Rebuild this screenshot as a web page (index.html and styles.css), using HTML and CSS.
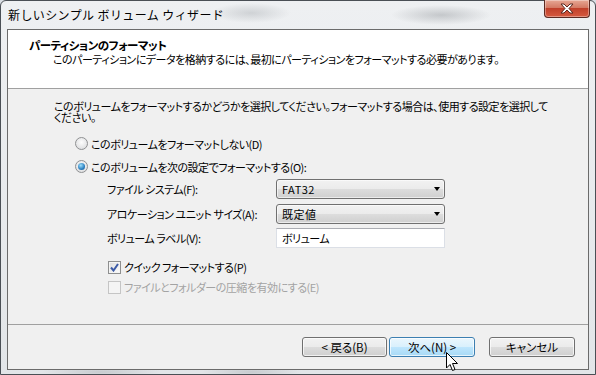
FILE: index.html
```html
<!DOCTYPE html>
<html lang="ja">
<head>
  <meta charset="UTF-8">
  <title>新しいシンプル ボリューム ウィザード</title>
  <link rel="stylesheet" href="styles.css">
</head>
<body>

  <div class="window">
    <div class="titlebar">
      <span class="title">新しいシンプル ボリューム ウィザード</span>
      <div class="close">
        <svg width="16" height="11" viewBox="0 0 16 11">
          <path d="M2 1 L5 1 L8 4 L11 1 L14 1 L10 5.5 L14 10 L11 10 L8 7 L5 10 L2 10 L6 5.5 Z" fill="#fff" stroke="#5a2a22" stroke-width="1"/>
        </svg>
      </div>
    </div>

    <div class="client">
      <!-- ヘッダー -->
      <div class="header">
        <div class="h-title">パーティションのフォーマット</div>
        <div class="h-sub">このパーティションにデータを格納するには、最初にパーティションをフォーマットする必要があります。</div>
      </div>

      <!-- 本体 -->
      <div class="content">
        <p class="intro">このボリュームをフォーマットするかどうかを選択してください。フォーマットする場合は、使用する設定を選択して<br>ください。</p>

        <div class="radios">
          <div class="opt"><span class="radio"></span>このボリュームをフォーマットしない(D)</div>
          <div class="opt"><span class="radio on"></span>このボリュームを次の設定でフォーマットする(O):</div>
        </div>

        <div class="fields">
          <div class="field">
            <span class="label">ファイル システム(F):</span>
            <div class="combo">FAT32<span class="arrow"></span></div>
          </div>
          <div class="field second">
            <span class="label">アロケーション ユニット サイズ(A):</span>
            <div class="combo">既定値<span class="arrow"></span></div>
          </div>
          <div class="field third">
            <span class="label">ボリューム ラベル(V):</span>
            <div class="textbox">ボリューム</div>
          </div>
        </div>

        <div class="checks">
          <div class="opt">
            <span class="check">
              <svg width="9" height="9" viewBox="0 0 9 9"><path d="M1 4.5 L3.5 7.5 L8 1" fill="none" stroke="#3b5aa6" stroke-width="2"/></svg>
            </span>クイック フォーマットする(P)
          </div>
          <div class="opt disabled"><span class="check"></span>ファイルとフォルダーの圧縮を有効にする(E)</div>
        </div>
      </div>

      <!-- ボタン -->
      <div class="footer">
        <button class="btn">&lt; 戻る(B)</button>
        <button class="btn btn-hot">次へ(N) &gt;</button>
        <button class="btn btn-cancel">キャンセル</button>
      </div>
    </div>

    <svg class="cursor" width="13" height="20" viewBox="0 0 13 20">
      <path d="M0.5 0.5 L0.5 16 L4 12.5 L6.5 18.5 L9 17.5 L6.5 11.5 L11.5 11.5 Z" fill="#fff" stroke="#000" stroke-width="1" stroke-linejoin="round"/>
    </svg>
  </div>

</body>
</html>
```

FILE: styles.css
```css
body {
  margin: 0;
  font-family: "Noto Sans CJK JP", "Noto Sans", sans-serif;
  font-size: 11px;
  letter-spacing: -0.5px;
  font-feature-settings: "palt";
  color: #000;
  background: #d8dde3;
}
.window {
  position: relative;
  width: 596px;
  height: 375px;
  box-sizing: border-box;
  display: flex;
  flex-direction: column;
  border: 1px solid #4a4f55;
  border-radius: 6px 6px 0 0;
  background:
    radial-gradient(ellipse 40px 10px at 250px 12px, rgba(150,155,160,0.35), transparent),
    radial-gradient(ellipse 50px 10px at 440px 14px, rgba(120,125,130,0.35), transparent),
    radial-gradient(ellipse 60px 6px at 100px 371px, rgba(150,155,160,0.35), transparent),
    radial-gradient(ellipse 50px 6px at 250px 371px, rgba(150,155,160,0.35), transparent),
    linear-gradient(#eef0f2, #e2e5e8);
}
.titlebar {
  height: 28px;
  display: flex;
  align-items: flex-start;
  justify-content: space-between;
}
.title {
  margin: 7px 0 0 7px;
  font-size: 12px;
  line-height: 14px;
  letter-spacing: 0.4px;
  font-feature-settings: normal;
}
.close {
  width: 46px;
  height: 18px;
  margin: -1px 5px 0 0;
  box-sizing: border-box;
  display: flex;
  align-items: center;
  justify-content: center;
  border: 1px solid #5c2a22;
  border-top: none;
  border-radius: 0 0 4px 4px;
  background: linear-gradient(#e7a895, #d47a64 45%, #c0402a 50%, #d65a40);
  box-shadow: inset 0 0 0 1px rgba(255,255,255,0.35);
}
.client {
  margin: 0 6px 0 6px;
  height: 339px;
  border: 1px solid #6b6b6b;
  display: flex;
  flex-direction: column;
  background: #f0f0f0;
  white-space: nowrap;
}
.header {
  height: 50px;
  background: #fff;
  border-bottom: 1px solid #a0a0a0;
  padding: 8px 0 0 21px;
  line-height: 14px;
}
.header .h-title {
  font-weight: bold;
  font-size: 11.5px;
}
.header .h-sub {
  padding-left: 24px;
}
.content {
  height: 235px;
  padding-left: 46px;
}
.intro {
  margin: 12px 0 0 0;
  line-height: 11px;
}
.radios {
  margin-top: 9px;
  padding-left: 21px;
}
.opt {
  height: 23px;
  display: flex;
  align-items: center;
}
.radio {
  position: relative;
  width: 11px;
  height: 11px;
  margin-right: 3px;
  border: 1px solid #8f9092;
  border-radius: 50%;
  background: radial-gradient(circle at 50% 40%, #fdfdfd, #d6d7d9);
}
.radio.on::after {
  content: "";
  position: absolute;
  left: 2px;
  top: 2px;
  width: 7px;
  height: 7px;
  border-radius: 50%;
  background: radial-gradient(circle at 40% 35%, #9fe0fb, #2b7fc0 60%, #1a4f82);
}
.fields {
  margin-top: 1px;
  padding-left: 53px;
}
.field {
  height: 20px;
  display: flex;
  align-items: center;
}
.field.second {
  margin-top: 5px;
}
.field.third {
  margin-top: 4px;
}
.label {
  width: 169px;
}
.combo {
  position: relative;
  width: 169px;
  height: 20px;
  box-sizing: border-box;
  padding-left: 5px;
  line-height: 18px;
  border: 1px solid #707070;
  border-radius: 3px;
  background: linear-gradient(#f2f2f2, #ebebeb 50%, #dddddd 50%, #cfcfcf);
  box-shadow: inset 0 0 0 1px rgba(255,255,255,0.6);
  letter-spacing: 0.5px;
}
.arrow {
  position: absolute;
  right: 4px;
  top: 7px;
  border-left: 3.5px solid transparent;
  border-right: 3.5px solid transparent;
  border-top: 4px solid #000;
}
.textbox {
  width: 169px;
  height: 20px;
  box-sizing: border-box;
  padding-left: 5px;
  line-height: 18px;
  background: #fff;
  border: 1px solid #dbdfe6;
  border-top-color: #abadb3;
}
.checks {
  margin-top: 9px;
  padding-left: 54px;
}
.checks .opt {
  height: 20px;
}
.check {
  width: 11px;
  height: 11px;
  margin-right: 3px;
  display: flex;
  align-items: center;
  justify-content: center;
  border: 1px solid #8e8f8f;
  background: linear-gradient(135deg, #dcdcdc, #fdfdfd);
  box-shadow: inset 0 0 0 1px #f4f4f4;
}
.disabled {
  color: #a3a3a3;
}
.disabled .check {
  border-color: #c5c5c5;
  background: #f4f4f4;
}
.footer {
  flex: 1;
  border-top: 1px solid #a0a0a0;
  display: flex;
  justify-content: flex-end;
  align-items: flex-start;
  padding: 12px 13px 0 0;
}
.btn {
  width: 85px;
  height: 20px;
  padding: 0;
  font-family: inherit;
  font-size: 11.5px;
  letter-spacing: 0;
  font-feature-settings: "palt";
  line-height: 18px;
  color: #000;
  border: 1px solid #707070;
  border-radius: 3px;
  background: linear-gradient(#f2f2f2, #ebebeb 50%, #dddddd 50%, #cfcfcf);
  box-shadow: inset 0 0 0 1px rgba(255,255,255,0.7);
}
.btn-hot {
  width: 86px;
  margin-left: 2px;
  border-color: #3c7fb1;
  background: linear-gradient(#eaf6fd, #d9f0fc 50%, #bee6fd 50%, #a7d9f5);
}
.btn-cancel {
  width: 86px;
  margin-left: 14px;
}
.cursor {
  position: absolute;
  left: 445px;
  top: 351px;
}
```
